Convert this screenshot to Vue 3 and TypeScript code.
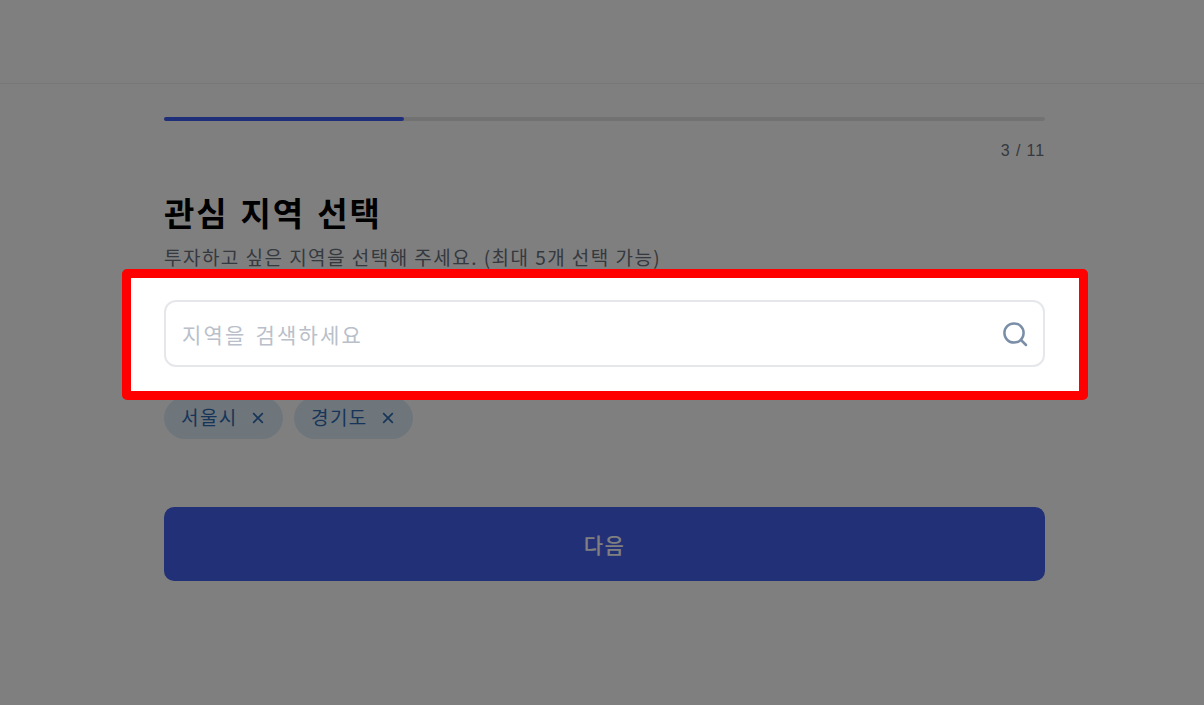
<script setup lang="ts">
const regions: string[] = ['서울시', '경기도']
</script>

<template>
  <div class="page">
    <header class="top"></header>
    <main class="main">
      <div class="track"><div class="fill"></div></div>
      <p class="count">3 / 11</p>
      <h1 class="title">관심 지역 선택</h1>
      <p class="sub">투자하고 싶은 지역을 선택해 주세요. (최대 5개 선택 가능)</p>
      <div class="chips">
        <span v-for="r in regions" :key="r" class="chip">{{ r }}
          <svg class="x" viewBox="0 0 12 12" width="12" height="12"><path d="M1.2 1.2l9.6 9.6M10.8 1.2l-9.6 9.6" fill="none" stroke="currentColor" stroke-width="1.7" /></svg>
        </span>
      </div>
      <button class="next" type="button">다음</button>
    </main>
    <div class="overlay"></div>
    <div class="spot-anchor">
      <div class="spot"></div>
      <div class="field">
        <span class="ph">지역을 검색하세요</span>
        <svg class="search" viewBox="0 0 26 26" width="26" height="26"><circle cx="12" cy="12" r="9.6" fill="none" stroke="#7b8ea8" stroke-width="2.5" /><path d="M19 19l5 5" fill="none" stroke="#7b8ea8" stroke-width="2.5" stroke-linecap="round" /></svg>
      </div>
    </div>
  </div>
</template>

<style>
body { margin: 0; background: #fff; }
</style>

<style scoped>
.page {
  position: relative;
  height: 705px;
  overflow: hidden;
  background: #fff;
  font-family: "Noto Sans CJK KR", "Noto Sans", sans-serif;
}
.top { height: 83px; border-bottom: 1px solid #f0f0f0; }
.main { width: 881px; margin-left: 164px; padding-top: 33px; }
.track { height: 4px; border-radius: 2px; background: #e5e5e5; }
.fill { width: 240px; height: 4px; border-radius: 2px; background: #3f5cf0; }
.count { margin: 19px 0 0; text-align: right; font-size: 16px; line-height: 22px; color: #6b7280; font-family: "Liberation Sans", sans-serif; letter-spacing: 0.9px; }
.title { margin: 25px 0 0; font-size: 33px; line-height: 50px; font-weight: 700; color: #000; letter-spacing: 1.8px; word-spacing: 3px; }
.sub { margin: 6px 0 0; font-size: 19px; line-height: 28px; color: #6b7280; letter-spacing: 1.47px; }
.chips { display: flex; gap: 11px; margin-top: 126px; }
.chip { display: flex; align-items: center; justify-content: space-between; width: 119px; height: 42px; padding: 0 19px 3px 17px; border-radius: 21px; background: #dcecf8; color: #2f6ab0; font-size: 19px; letter-spacing: 1.4px; box-sizing: border-box; }
.x { display: block; margin-top: 3px; }
.next { display: block; width: 100%; height: 74px; margin-top: 68px; padding-bottom: 2px; border: 0; border-radius: 10px; background: #4460ee; color: #fff; font: 500 21px "Noto Sans CJK KR", sans-serif; letter-spacing: 1.5px; }
.overlay { position: absolute; inset: 0; background: rgba(0, 0, 0, 0.5); }
.spot-anchor { position: absolute; left: 164px; top: 300px; width: 881px; }
.spot { position: absolute; left: -42px; right: -43px; top: -31px; bottom: -33px; background: #fff; border: 9px solid #f00; border-radius: 5px; }
.field { position: relative; display: flex; align-items: center; justify-content: space-between; box-sizing: border-box; height: 67px; padding: 0 15px 0 16px; border: 2px solid #e5e7eb; border-radius: 12px; background: #fff; }
.ph { font-size: 21px; color: #b9c0ca; letter-spacing: 2.2px; word-spacing: 2px; }
.search { display: block; }
</style>
